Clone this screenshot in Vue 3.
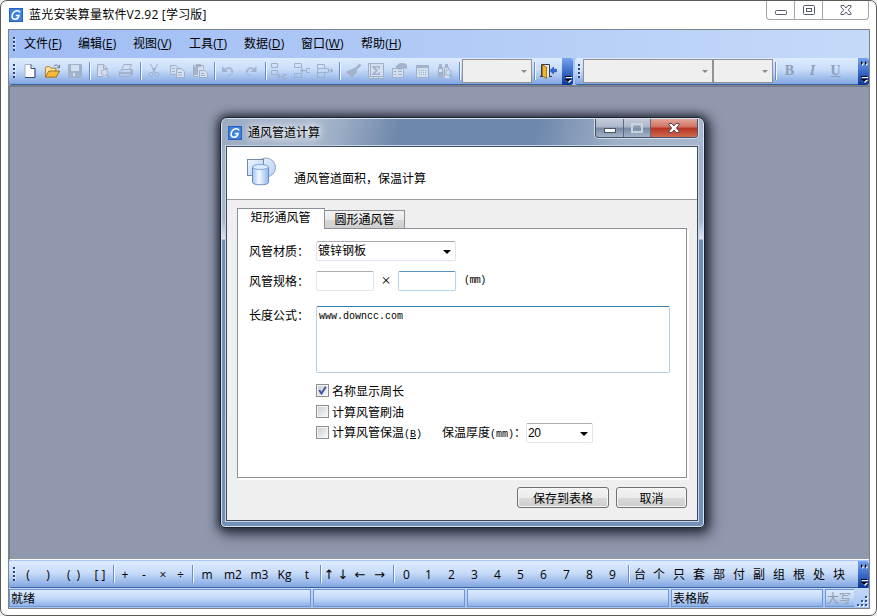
<template>
  <div class="window">
    <header class="titlebar">
      <svg class="logo" viewBox="0 0 14 14">
        <rect width="14" height="14" fill="#2a5fc0" />
        <rect x="1" y="1" width="12" height="12" fill="#3b82dd" />
        <path d="M11.200 4.500C9.800 1.800 5.500 2.200 3.800 5.500C2.100 9 3.500 11.300 6 11.200C8.500 11.100 9.600 9.500 10 7.500H6.800" fill="none" stroke="#fff" stroke-width="1.600" />
      </svg>
      <span class="title">蓝光安装算量软件V2.92 [学习版]</span>
      <div class="caption">
        <span class="cap-btn">
          <svg viewBox="0 0 14 12"><rect x="1.500" y="6.500" width="11" height="4" rx="1" fill="#fff" stroke="#555a6b" /></svg>
        </span>
        <span class="cap-btn">
          <svg viewBox="0 0 14 12"><rect x="1.500" y="1.500" width="11" height="9" rx="1" fill="#fff" stroke="#555a6b" /><rect x="4.500" y="4.500" width="5" height="3" fill="#fff" stroke="#555a6b" /></svg>
        </span>
        <span class="cap-btn wide">
          <svg viewBox="0 0 14 12"><path d="M2 1.500H5L7 4L9 1.500H12V3L9.300 6L12 9V10.500H9L7 8L5 10.500H2V9L4.700 6L2 3Z" fill="#fff" stroke="#555a6b" /></svg>
        </span>
      </div>
    </header>

    <div class="client">
      <nav class="menubar">
        <i class="grip"></i>
        <span v-for="m in menus" :key="m.key" class="menu-item">{{ m.label }}(<u>{{ m.key }}</u>)</span>
      </nav>

      <div class="toolbars">
        <div class="toolbar standard">
          <i class="grip"></i>
          <span class="tool">
            <svg viewBox="0 0 16 16">
              <path d="M3.500 1.500H9.500L13.500 5.500V14.500H3.500Z" fill="#fff" stroke="#a0b4d0" />
              <path d="M9.500 1.500V5.500H13.500V14.500H3.500" fill="none" stroke="#34486b" />
            </svg>
          </span>
          <span class="tool">
            <svg viewBox="0 0 18 16">
              <path d="M1.500 14V4.500L2.500 3.500H6L7.500 5H12.500V8" fill="#ffe69a" stroke="#a8782a" />
              <path d="M1.500 14.500L5 8H16.500L13 14.500Z" fill="#f6b93c" stroke="#9a6a1c" />
              <path d="M10.500 3C12 1 14.500 1.200 15.500 3.500M16.500 1.500V4.500H13.500" fill="none" stroke="#5d6f90" />
            </svg>
          </span>
          <span class="tool"><ToolIcon name="save" /></span>
          <template v-for="(group, i) in disabledGroups" :key="i">
            <i class="sep"></i>
            <span v-for="name in group" :key="name" class="tool"><ToolIcon :name="name" /></span>
          </template>
          <i class="sep"></i>
          <span class="tool-combo zoom"><i class="arrow"></i></span>
          <i class="sep"></i>
          <span class="tool">
            <svg viewBox="0 0 17 16">
              <path d="M1.500 14V1.500H9.500V14M0 13.500H3M9 13.500H12" fill="#dfe8f4" stroke="#3c3c3c" />
              <path d="M2.500 2L6.500 4V15.500L2.500 13Z" fill="#f2b622" stroke="#8a6410" stroke-width=".8" />
              <path d="M10 7.500L13.500 4V6.200H16.500V8.800H13.500V11Z" fill="#2f68d8" stroke="#153e96" stroke-width=".6" />
            </svg>
          </span>
          <span class="overflow end">
            <svg viewBox="0 0 11 26"><path d="M4 19.500H10" stroke="#fff" /><path d="M3 18.500H9" stroke="#000" /><path d="M4 22H10L7 25Z" fill="#fff" /><path d="M3 21H9L6 24Z" fill="#000" /></svg>
          </span>
        </div>

        <div class="toolbar format">
          <i class="grip"></i>
          <span class="tool-combo font"><i class="arrow"></i></span>
          <span class="tool-combo size"><i class="arrow"></i></span>
          <i class="sep"></i>
          <span class="tool letter bold">B</span>
          <span class="tool letter italic">I</span>
          <span class="tool letter under">U</span>
          <OverflowTab class="end" />
        </div>
      </div>

      <main class="workspace"></main>

      <div class="toolbar symbols">
        <i class="grip"></i>
        <template v-for="(group, i) in symbolGroups" :key="group.name">
          <i v-if="i" class="sep"></i>
          <div class="symbol-group" :class="group.name">
            <span v-for="s in group.items" :key="s">{{ s }}</span>
          </div>
        </template>
        <OverflowTab class="end" />
      </div>

      <footer class="statusbar">
        <span class="pane">就绪</span>
        <span class="pane"></span>
        <span class="pane"></span>
        <span class="pane">表格版</span>
        <span class="pane dim">大写</span>
        <svg class="size-grip" viewBox="0 0 12 12">
          <g fill="#fff"><path d="M10 2h2v2h-2zM6 6h2v2H6zM10 6h2v2h-2zM2 10h2v2H2zM6 10h2v2H6zM10 10h2v2h-2z" /></g>
          <g fill="#2d4f9e"><path d="M9 1h2v2H9zM5 5h2v2H5zM9 5h2v2H9zM1 9h2v2H1zM5 9h2v2H5zM9 9h2v2H9z" /></g>
        </svg>
      </footer>
    </div>

    <section class="dialog">
      <div class="dialog-title">
        <svg class="logo" viewBox="0 0 14 14">
          <rect width="14" height="14" fill="#2a5fc0" />
          <rect x="1" y="1" width="12" height="12" fill="#3b82dd" />
          <path d="M11.200 4.500C9.800 1.800 5.500 2.200 3.800 5.500C2.100 9 3.500 11.300 6 11.200C8.500 11.100 9.600 9.500 10 7.500H6.800" fill="none" stroke="#fff" stroke-width="1.600" />
        </svg>
        <span class="title">通风管道计算</span>
        <div class="dialog-caption">
          <span class="cap-btn">
            <svg viewBox="0 0 14 12"><rect x="1.500" y="6.500" width="11" height="4" fill="#fff" stroke="#4b5568" /></svg>
          </span>
          <span class="cap-btn off">
            <svg viewBox="0 0 14 12"><rect x="2" y="2" width="10" height="8" fill="none" stroke="#c9d2df" stroke-width="2" /><rect x="4.500" y="4.500" width="5" height="3" fill="none" stroke="#8595ac" /></svg>
          </span>
          <span class="cap-btn close">
            <svg viewBox="0 0 14 12"><path d="M2 1.500H5L7 4L9 1.500H12V3L9.300 6L12 9V10.500H9L7 8L5 10.500H2V9L4.700 6L2 3Z" fill="#fff" stroke="#5c4450" /></svg>
          </span>
        </div>
      </div>

      <div class="dialog-body">
        <div class="banner">
          <svg class="shapes" viewBox="0 0 30 30">
            <defs>
              <linearGradient id="shape-flat" x1="0" y1="0" x2="1" y2="1">
                <stop offset="0" stop-color="#eef5fe" /><stop offset="1" stop-color="#b4d0f3" />
              </linearGradient>
              <linearGradient id="shape-tube">
                <stop offset="0" stop-color="#9fc4f2" /><stop offset=".4" stop-color="#f4f9ff" /><stop offset="1" stop-color="#90b8ec" />
              </linearGradient>
            </defs>
            <circle cx="19" cy="10.500" r="9.500" fill="url(#shape-flat)" stroke="#8ba6cb" />
            <rect x=".5" y="2.500" width="16" height="16" fill="url(#shape-flat)" stroke="#7688a6" />
            <path d="M5.500 10V25.500C5.500 28.500 21.500 28.500 21.500 25.500V10Z" fill="url(#shape-tube)" stroke="#6b8cbb" />
            <ellipse cx="13.500" cy="10" rx="8" ry="2.500" fill="#dcebfd" stroke="#84a4d0" />
          </svg>
          <span>通风管道面积，保温计算</span>
        </div>

        <div class="tabs">
          <span class="tab active">矩形通风管</span>
          <span class="tab">圆形通风管</span>
        </div>

        <div class="panel">
          <div class="row material">
            <label>风管材质：</label>
            <span class="combo">镀锌钢板<i class="arrow"></i></span>
          </div>
          <div class="row spec">
            <label>风管规格：</label>
            <input class="field" type="text" />
            <span class="times">×</span>
            <input class="field hot" type="text" />
            <span class="unit">(mm)</span>
          </div>
          <div class="row formula">
            <label>长度公式：</label>
            <textarea v-model="formula" spellcheck="false"></textarea>
          </div>
          <div class="checks">
            <div v-for="c in checks" :key="c.label" class="check-row">
              <i class="box"><svg v-if="c.on" viewBox="0 0 9 9"><path d="M1.200 4L3.500 7.500L7.800 .8" fill="none" stroke="#3c56a5" stroke-width="2" /></svg></i>
              <span class="check-text">{{ c.label }}<b v-if="c.key" class="mono">(<u>{{ c.key }}</u>)</b></span>
              <template v-if="c.key">
                <span class="thickness">保温厚度<b class="mono">(mm)</b>：</span>
                <span class="combo small"><b class="num">20</b><i class="arrow"></i></span>
              </template>
            </div>
          </div>
        </div>

        <div class="actions">
          <button class="save">保存到表格</button>
          <button>取消</button>
        </div>
      </div>
    </section>
  </div>
</template>

<script setup>
  import { ref, h } from 'vue'

  const formula = ref('www.downcc.com')

  const menus = [
    { label: '文件', key: 'F' },
    { label: '编辑', key: 'E' },
    { label: '视图', key: 'V' },
    { label: '工具', key: 'T' },
    { label: '数据', key: 'D' },
    { label: '窗口', key: 'W' },
    { label: '帮助', key: 'H' },
  ]

  const checks = [
    { label: '名称显示周长', on: true },
    { label: '计算风管刷油', on: false },
    { label: '计算风管保温', on: false, key: 'B' },
  ]

  const disabledGroups = [
    ['preview', 'print'],
    ['cut', 'copy', 'paste'],
    ['undo', 'redo'],
    ['insertBelow', 'insertMid', 'insertOut'],
    ['brush', 'sum', 'props', 'grid', 'find'],
  ]

  const symbolGroups = [
    { name: 'brackets', items: ['(', ')', '(\u2002)', '[ ]'] },
    { name: 'ops', items: ['+', '-', '×', '÷'] },
    { name: 'units', items: ['m', 'm2', 'm3', 'Kg', 't'] },
    { name: 'arrows', items: ['↑', '↓', '←', '→'] },
    { name: 'digits', items: [...'0123456789'] },
    { name: 'counters', items: [...'台个只套部付副组根处块'] },
  ]

  // s = stroked outline, f = filled area, b = light backing
  const icons = {
    save: { b: 'M1.5 1.500H14.500V14.500H1.500Z', s: 'M1.500 1.500H14.500V14.500H1.500Z', f: 'M2 2H4V8H12V2H14V14H2ZM6 10V13H8V10Z' },
    preview: { b: 'M2.500 1.500H8.500L12.500 5.500V13.500H2.500Z', s: 'M8 13.500H2.500V1.500H8.500L12.500 5.500V7M8.500 1.500V5.500H12M12.500 9.500A3 3 0 1 1 6.500 9.500A3 3 0 1 1 12.500 9.500', f: 'M11 12L12 11L15.500 14.500L14 16Z' },
    print: { b: 'M5 1.500H14L12 7H3Z', s: 'M3.500 7L6 1.500H13.500L11.500 7M1.500 8.500L4 6.500H14.500V11L12.500 13.500H1.500Z', f: 'M2 9H12V11H2ZM12 8L14 7V11L12 13Z' },
    cut: { s: 'M4.500 1L9 10M11.500 1L7 10M7 11.500A2 2 0 1 1 3 11.500A2 2 0 1 1 7 11.500M13 11.500A2 2 0 1 1 9 11.500A2 2 0 1 1 13 11.500', f: 'M6 5L10 5L8 10Z' },
    copy: { b: 'M1.500 2.500H9.500V10.500H1.500ZM7.500 6.500H15.500V14.500H7.500Z', s: 'M6.500 11.500H1.500V2.500H7L9.500 5M7.500 5.500H12.500L15.500 8.500V14.500H7.500ZM3 5.500H6M3 8.500H6M9 9.500H13M9 12H13', f: '' },
    paste: { b: 'M1.500 2.500H11.500V13.500H1.500ZM7.500 7.500H15.500V14.500H7.500Z', s: 'M6.500 13.500H1.500V2.500H11.500V6M7.500 7.500H13L15.500 10V14.500H7.500ZM9 10.500H12M9 12.500H13', f: 'M4 1H9V4H4ZM2 4H6V12H2Z' },
    undo: { s: 'M5 6.500C8.500 3 13.500 5 12.500 9C12 11.500 9.500 12.500 7.500 12.500M5.500 7C8.500 4 12.500 6 11.500 9', f: 'M2 3V9H8Z' },
    redo: { s: 'M11 6.500C8 3 3 5 3.500 9C4 11.500 6 12.500 8 12.500M10.500 7C8 4 4.500 6 4.500 9', f: 'M13.500 3V9H7.500Z' },
    insertBelow: { s: 'M.5 .5H6.500V4.500H.5ZM.5 7.500H6.500V11.500H.5ZM8 13.500H12M16 11.500H12.500V15.500H16', f: 'M6 13.500L9 10.500V16Z' },
    insertMid: { s: 'M.5 .5H7.500V4.500H.5ZM.5 10.500H7.500V14.500H.5ZM8 7.500H12M16 5.500H12.500V9.500H16', f: 'M6 7.500L9 4.500V10.500Z' },
    insertOut: { s: 'M.5 1.500H7.500V5.500H.5ZM.5 5.500H11.500V9.500H.5ZM.5 9.500H7.500V14.500H.5ZM12 7.500H15', f: 'M13.500 4.500L16.500 7.500L13.500 10.500Z' },
    brush: { s: 'M2.500 7.500L8.500 13', f: 'M10 5L14.500 .5L16.500 2.500L11.500 7L12 9L7 15L1 9L7 6Z' },
    sum: { b: 'M.5 .5H15.500V15.500H.5Z', s: 'M.5 .5H15.500V15.500H.5ZM.5 13.500H15.500M5.500 13.500V15M10.500 13.500V15M2.500 .5V13', f: 'M4 3H12V6H11L10.500 4.500H7.500L10 7.500L7 10.500H10.500L11 9H12V12H4V11L7.500 7.500L4 4Z' },
    props: { b: 'M1.500 5.500H12.500V14.500H1.500Z', s: 'M1.500 5.500H12.500V14.500H1.500ZM3 8.500H5M7 8.500H11M3 11.500H5M7 11.500H11', f: 'M5 3L9 0H13L16 2V6L12 5L9 7L5 5Z' },
    grid: { b: 'M2.500 2.500H14.500V14.500H2.500Z', s: 'M2.500 2.500H14.500V14.500H2.500Z', f: 'M3 2H14V5H3ZM5 7h1v1H5zM7 7h1v1H7zM9 7h1v1H9zM11 7h1v1h-1zM5 9h1v1H5zM7 9h1v1H7zM9 9h1v1H9zM11 9h1v1h-1zM5 11h1v1H5zM7 11h1v1H7zM9 11h1v1H9zM11 11h1v1h-1z' },
    find: { b: 'M1 2H6V15H1ZM7 2H12V15H7Z', s: 'M1.500 4.500H5.500V14.500H1.500ZM7.500 14.500V4.500H11.500V6M14.500 9.500A3 3 0 1 1 8.500 9.500A3 3 0 1 1 14.500 9.500', f: 'M2 1H5V6H2ZM8 1H11V5H8ZM2 9H5V14H2ZM12.500 13L13.500 11.500L17 14.500L15.500 16Z' },
  }

  const ToolIcon = ({ name }) => {
    const icon = icons[name]
    return h('svg', { viewBox: '0 0 17 16', width: 17, height: 16 }, [
      h('path', { d: icon.b, fill: '#d3dfef' }),
      h('path', { d: icon.f, fill: '#a3b3cb', 'fill-rule': 'evenodd' }),
      h('path', { d: icon.s, fill: 'none', stroke: '#a0b0c8' }),
    ])
  }
  ToolIcon.props = ['name']

  const OverflowTab = () =>
    h('span', { class: 'overflow' }, [
      h('svg', { viewBox: '0 0 11 26', width: 11, height: 26 }, [
        h('path', { d: 'M4 4L6 6L4 8ZM8 4L10 6L8 8Z', fill: '#fff' }),
        h('path', { d: 'M3 3L5 5L3 7ZM7 3L9 5L7 7Z', fill: '#000' }),
        h('path', { d: 'M4 19.500H10', stroke: '#fff' }),
        h('path', { d: 'M3 18.500H9', stroke: '#000' }),
        h('path', { d: 'M4 22H10L7 25Z', fill: '#fff' }),
        h('path', { d: 'M3 21H9L6 24Z', fill: '#000' }),
      ]),
    ])
</script>

<style>
  body {
    background: #e9ecef;
    overflow: hidden;
  }

  .overflow {
    width: 11px;
    height: 27px;
    flex: none;
    border-radius: 0 3px 3px 0;
    background: linear-gradient(#76a3f0, #3c6cca 50%, #0b3596);
  }

  .overflow svg {
    display: block;
    width: 11px;
    height: 26px;
  }
</style>

<style scoped>
  .window {
    position: relative;
    box-sizing: border-box;
    width: 877px;
    height: 616px;
    padding: 0 7px;
    border: 1px solid #5b5b5b;
    border-radius: 7px;
    background: #fff;
    font: 12px/16px 'Open Sans', 'Noto Sans CJK SC', sans-serif;
    color: #000;
  }

  .titlebar {
    display: flex;
    height: 28px;
    align-items: center;
  }

  .logo {
    width: 14px;
    height: 14px;
    flex: none;
  }

  .titlebar .logo {
    margin-left: 1px;
  }

  .titlebar .title {
    margin-left: 6px;
    white-space: nowrap;
    letter-spacing: 0.2px;
  }

  .caption {
    display: flex;
    align-self: flex-start;
    box-sizing: border-box;
    width: 103px;
    height: 19px;
    margin-left: auto;
    border: 1px solid #a5a5a5;
    border-top: 0;
    border-radius: 0 0 4px 4px;
  }

  .cap-btn {
    display: flex;
    width: 27px;
    align-items: center;
    justify-content: center;
    border-right: 1px solid #a5a5a5;
  }

  .cap-btn svg {
    width: 14px;
    height: 12px;
  }

  .cap-btn.wide {
    flex: 1;
    border-right: 0;
  }

  .client {
    display: flex;
    flex-direction: column;
    box-sizing: border-box;
    width: 862px;
    height: 580px;
    border: 1px solid #7f848c;
    background: #a9c6f5;
  }

  .menubar {
    display: flex;
    height: 28px;
    flex: none;
    align-items: center;
    background: linear-gradient(90deg, #9fbcf4, #c4daf9);
  }

  .menubar .grip {
    margin-right: 9px;
  }

  .menu-item {
    width: 55px;
    flex: none;
    white-space: nowrap;
    letter-spacing: 0.1px;
  }

  .menu-item:nth-of-type(1) {
    width: 54px;
  }

  .menu-item:nth-of-type(3) {
    width: 56px;
  }

  .menu-item:nth-of-type(5) {
    width: 57px;
  }

  .menu-item:nth-of-type(6) {
    width: 60px;
  }

  .grip {
    width: 2px;
    height: 14px;
    flex: none;
    margin: 0 5px 0 4px;
    background: repeating-linear-gradient(#27427f 0 2px, #e4efff 2px 3px, transparent 3px 4px);
    box-shadow: 1px 0 0 rgba(255, 255, 255, 0.35);
  }

  .toolbars {
    display: flex;
    height: 28px;
    flex: none;
    gap: 2px;
    background: #a9c6f5;
    border-bottom: 1px solid #808080;
    box-sizing: border-box;
  }

  .toolbar {
    display: flex;
    box-sizing: border-box;
    height: 27px;
    align-items: center;
    border-bottom: 1px solid #3b619c;
    border-radius: 3px;
    background: linear-gradient(#deebfd, #c8dcf9 45%, #82a6e2);
  }

  .standard {
    width: 564px;
    flex: none;
  }

  .standard .grip {
    margin-right: 3px;
  }

  .format {
    flex: 1;
  }

  .format .grip {
    margin: 0 3px;
  }

  .tool {
    display: flex;
    width: 23px;
    flex: none;
    justify-content: center;
  }

  .tool svg {
    width: 17px;
    height: 16px;
  }

  .sep {
    box-sizing: border-box;
    width: 2px;
    height: 18px;
    margin: 0 1px 0 2px;
    flex: none;
    border-left: 1px solid #6a8ccb;
    border-right: 1px solid #f1f7ff;
  }

  .tool-combo {
    display: flex;
    box-sizing: border-box;
    height: 24px;
    flex: none;
    align-items: center;
    justify-content: flex-end;
    padding-right: 4px;
    border: 1px solid #919191;
    background: #efefef;
  }

  .tool-combo .arrow {
    border: 3px solid transparent;
    border-top-color: #8b8b8b;
    border-bottom: 0;
  }

  .tool-combo.zoom {
    width: 70px;
  }

  .tool-combo.font {
    width: 130px;
  }

  .tool-combo.size {
    width: 60px;
  }

  .letter {
    font: bold 14px/18px 'Liberation Serif', serif;
    color: #8f9fb8;
  }

  .letter.italic {
    font-style: italic;
  }

  .letter.under {
    text-decoration: underline;
  }

  .end {
    margin-left: auto;
  }

  .workspace {
    flex: 1;
    margin-bottom: 1px;
    border-left: 1px solid #737887;
    border-top: 1px solid #747b90;
    border-bottom: 1px solid #fff;
    background: #9098ae;
  }

  .symbols {
    flex: none;
    border-radius: 3px 0 0 3px;
    font: 12px/16px 'Open Sans', 'Noto Sans CJK SC', sans-serif;
  }

  .symbols .grip {
    margin-right: 3px;
  }

  .symbol-group {
    display: grid;
    padding-top: 2px;
    text-align: center;
    white-space: nowrap;
  }

  .brackets {
    grid-template-columns: 20px 20px 31px 22px;
  }

  .ops {
    grid-template-columns: 18px 20px 18px 17px;
    padding-right: 1px;
  }

  .units {
    grid-template-columns: 24px 28px 25px 25px 20px;
    padding-right: 1px;
  }

  .arrows {
    grid-template-columns: 12px 16px 18px 21px;
    padding-right: 1px;
    font-family: 'DejaVu Sans', sans-serif;
    font-size: 13px;
  }

  .digits {
    grid-template-columns: 21px repeat(9, 23px);
    padding-right: 2px;
  }

  .counters {
    grid-template-columns: 18px repeat(10, 20px);
  }

  .statusbar {
    display: grid;
    grid-template-columns: 303px 153px 203px 153px 30px 12px;
    column-gap: 1px;
    height: 20px;
    flex: none;
    box-sizing: border-box;
    padding: 1px 0;
    background: linear-gradient(#c3d9f8, #a6c3f0);
    font: 12px/16px 'Noto Sans CJK SC', sans-serif;
  }

  .pane {
    box-sizing: border-box;
    margin-right: 1px;
    padding-left: 1px;
    overflow: hidden;
    white-space: nowrap;
    border: 1px solid #6f95d2;
    background: linear-gradient(#dcebfd, #c4d9f8 50%, #8fb1e8);
  }

  .pane.dim {
    color: #949aa6;
    border-right: 0;
  }

  .size-grip {
    width: 12px;
    height: 12px;
    align-self: end;
  }

  /* dialog window floating over the workspace */
  .dialog {
    position: absolute;
    left: 219px;
    top: 116px;
    box-sizing: border-box;
    width: 485px;
    height: 411px;
    border: 1px solid #1d232c;
    border-radius: 7px 7px 5px 5px;
    padding: 0 6px 5px 5px;
    background: linear-gradient(#9fb1c9, #a5b6cd 25%, #dce5ef 121px, #6f8db5 122px, #7390b6);
    box-shadow: inset 0 0 0 1px #d5e3f2, 0 0 8px 2px rgba(20, 23, 35, 0.75), 3px 4px 14px 3px rgba(20, 23, 35, 0.6);
    font-family: 'Liberation Sans', 'Noto Sans CJK SC', sans-serif;
  }

  .dialog-title {
    display: flex;
    height: 27px;
    margin: 1px -5px 0 -4px;
    align-items: center;
    border-radius: 5px 5px 0 0;
    background: linear-gradient(100deg, #9aabc2 0, #aebcd0 18%, #9aabc4 25%, #6d88aa 37%, #6d88aa 65%, #9fb0c8 82%, #a8b7cd);
  }

  .dialog-title .logo {
    margin-left: 6px;
  }

  .dialog-title .title {
    margin-left: 6px;
    text-shadow: 0 0 6px #fff, 0 0 10px #fff;
  }

  .dialog-caption {
    display: flex;
    align-self: flex-start;
    box-sizing: border-box;
    width: 103px;
    height: 19px;
    margin: 0 5px 0 auto;
    border: 1px solid #46526a;
    border-top: 0;
    border-radius: 0 0 4px 4px;
    box-shadow: 0 0 0 1px #d4deea;
    overflow: hidden;
    background: linear-gradient(#c4ccda, #aab6c8 45%, #7889a2 50%, #a3b3c9);
  }

  .dialog-caption .cap-btn {
    border-color: #5d6b81;
  }

  .dialog-caption .off {
    width: 26px;
  }

  .dialog-caption .close {
    flex: 1;
    border: 0;
    background: linear-gradient(#e3a79b, #d2705e 45%, #b53421 50%, #d0694f);
  }

  .dialog-body {
    box-sizing: border-box;
    height: 375px;
    border: 1px solid #3f4b5d;
    outline: 1px solid #c6d5e6;
    outline-offset: 0;
    background: #efefef;
  }

  .banner {
    display: flex;
    height: 52px;
    align-items: flex-start;
    border-bottom: 1px solid #9c9c9c;
    background: #fff;
  }

  .banner .shapes {
    width: 30px;
    height: 30px;
    margin: 10px 17px 0 20px;
  }

  .banner span {
    margin-top: 24px;
  }

  .tabs {
    display: flex;
    height: 21px;
    margin: 8px 0 0 10px;
    align-items: flex-end;
  }

  .tab {
    box-sizing: border-box;
    width: 80px;
    height: 18px;
    margin-bottom: 1px;
    padding-top: 1px;
    text-align: center;
    border: 1px solid #8c8e98;
    border-left: 0;
    border-bottom: 0;
    background: linear-gradient(#f2f2f2, #e9e9e9 50%, #d7d7d7 51%, #cfcfcf);
  }

  .tab.active {
    position: relative;
    width: 88px;
    height: 21px;
    margin-bottom: 0;
    padding-right: 1px;
    border-left: 1px solid #8c8e98;
    background: #fff;
    z-index: 1;
  }

  .panel {
    box-sizing: border-box;
    width: 450px;
    height: 250px;
    margin: -1px 0 0 10px;
    padding: 12px 0 0 11px;
    border: 1px solid #8c8e98;
    box-shadow: 2px 2px 0 #fff;
    background: #fff;
  }

  .row {
    display: flex;
    align-items: center;
  }

  .row label {
    width: 67px;
    flex: none;
    padding-top: 1px;
    white-space: nowrap;
  }

  .combo {
    display: flex;
    box-sizing: border-box;
    width: 140px;
    height: 20px;
    align-items: center;
    justify-content: space-between;
    padding: 0 4px 0 1px;
    border: 1px solid #e0e4ee;
    border-top-color: #abadb3;
    border-radius: 2px;
  }

  .combo .arrow {
    border: 4px solid transparent;
    border-top-color: #000;
    border-bottom: 0;
    margin-top: 2px;
  }

  .spec {
    margin-top: 10px;
  }

  .field {
    box-sizing: border-box;
    width: 58px;
    height: 20px;
    border: 1px solid #e0e4ee;
    border-top-color: #abadb3;
    border-radius: 2px;
    outline: 0;
  }

  .field.hot {
    border-color: #b7d5ea;
    border-top-color: #5794bf;
  }

  .times {
    width: 24px;
    text-align: center;
    font: 17px/16px 'Liberation Serif', serif;
  }

  .unit {
    margin-left: 8px;
    font: 10px/16px 'Liberation Mono', monospace;
    letter-spacing: -0.6px;
  }

  .formula {
    margin-top: 15px;
    align-items: flex-start;
  }

  .formula label {
    margin-top: 1px;
  }

  textarea {
    display: block;
    box-sizing: border-box;
    width: 354px;
    height: 67px;
    padding: 2px 2px 0;
    border: 1px solid #b5cfe7;
    border-top-color: #3d7bad;
    border-radius: 2px;
    outline: 0;
    resize: none;
    font: 10px/16px 'Liberation Mono', monospace;
    color: #000;
  }

  .checks {
    margin: 7px 0 0 67px;
  }

  .check-row {
    display: flex;
    height: 21px;
    align-items: center;
    white-space: nowrap;
  }

  .check-text {
    padding-top: 2px;
  }

  .box {
    box-sizing: border-box;
    width: 13px;
    height: 13px;
    flex: none;
    margin-right: 3px;
    padding: 1px;
    border: 1px solid #8e8f8f;
    background: linear-gradient(135deg, #cdd1d7, #f6f6f6) content-box, #f4f4f4;
  }

  .box svg {
    display: block;
    width: 9px;
    height: 9px;
  }

  .mono {
    font: 10px/16px 'Liberation Mono', monospace;
  }

  .thickness {
    width: 84px;
    margin-left: 20px;
    padding-top: 2px;
  }

  .combo.small {
    width: 67px;
    margin-top: 1px;
  }

  .num {
    font-weight: normal;
    letter-spacing: -0.4px;
  }

  .actions {
    display: flex;
    justify-content: flex-end;
    gap: 7px;
    margin: 9px 10px 0 0;
  }

  button {
    box-sizing: border-box;
    width: 71px;
    height: 21px;
    padding: 0;
    border: 1px solid #707070;
    border-radius: 3px;
    background: linear-gradient(#f3f3f3, #ebebeb 50%, #dadada 51%, #cdcdcd);
    box-shadow: inset 0 0 0 1px #f7f7f7;
    font: 12px/17px 'Noto Sans CJK SC', sans-serif;
    color: #000;
  }

  button.save {
    width: 92px;
  }
</style>
